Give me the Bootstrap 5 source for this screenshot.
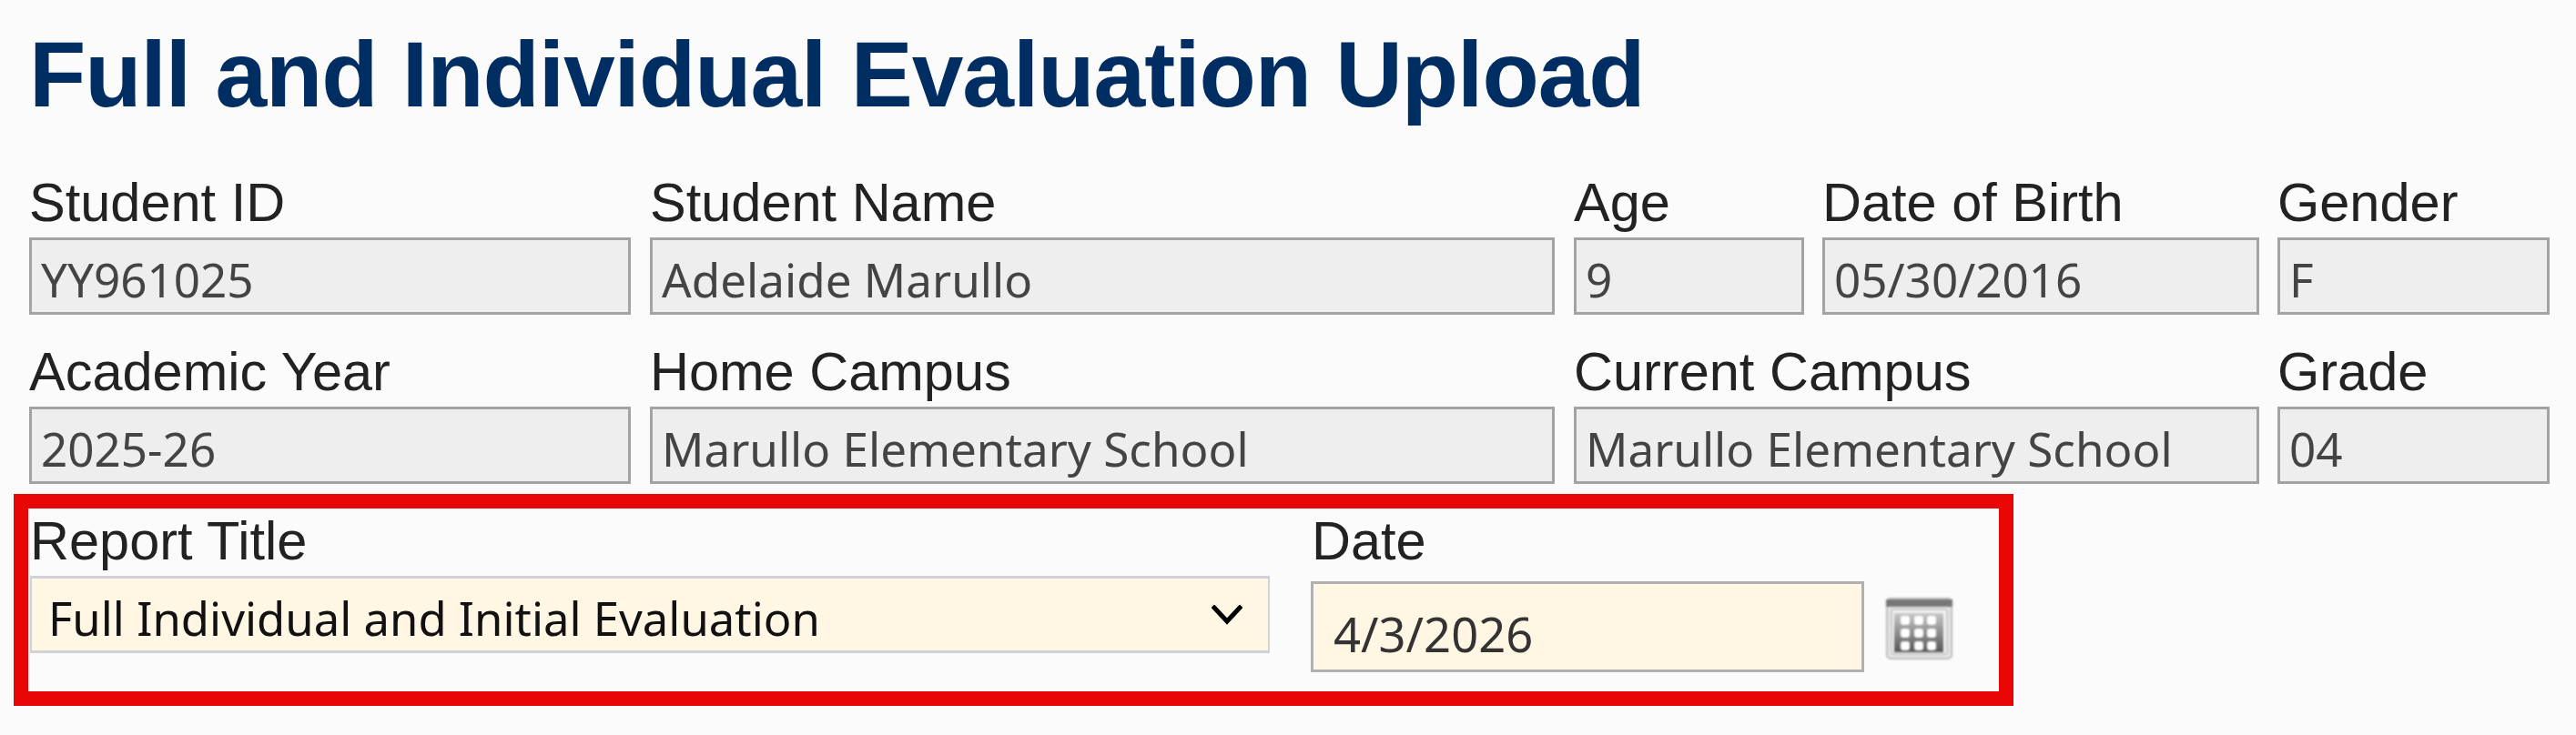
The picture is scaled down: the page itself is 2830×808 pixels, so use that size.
<!DOCTYPE html>
<html lang="en">
<head>
<meta charset="utf-8">
<title>Full and Individual Evaluation Upload</title>
<link href="https://cdn.jsdelivr.net/npm/bootstrap@5.3.0/dist/css/bootstrap.min.css" rel="stylesheet">
<style>
html,body{background:#fbfbfb;}
body{font-family:"Liberation Sans",Arial,sans-serif;overflow:hidden;}
.page-wrap{padding:25px 0 0 32px;width:2830px;}
.page-title{font:700 102px/114px "Liberation Sans",Arial,sans-serif;color:#002d62;margin:0 0 51px;letter-spacing:-1.05px;}
.field-grid{display:grid;grid-template-columns:682px 1015px 273px 500px 299px;row-gap:30px;}
.span-two{grid-column:span 2;}
.gap-wide{padding-right:21px;}
.gap-narrow{padding-right:20px;}
.field-label{display:block;font-size:59.5px;line-height:66px;color:#222;margin:0 0 5px;white-space:nowrap;}
.form-control.ro-field{height:85px;border:3px solid #a3a3a3;border-radius:0;background:#eee;color:#444;font:400 51.2px/1 "Noto Sans",sans-serif;padding:7px 10px 0;box-shadow:none;opacity:1;}
.red-frame{margin:11px 0 0 -17px;width:2197px;height:233px;border:16px solid #e80606;display:flex;padding:3px 0 0 2px;gap:45px;}
.title-col{width:1362px;}
.date-col{width:705px;}
.date-label{margin-bottom:11px;padding-left:1px;}
.form-select.title-select{height:85px;border:3px solid #cfd3d6;border-width:3px 2px;border-radius:0;background-color:#fff6e3;background-image:url("data:image/svg+xml,%3csvg xmlns='http://www.w3.org/2000/svg' viewBox='0 0 34 22'%3e%3cpath fill='none' stroke='%23000' stroke-width='5' stroke-linecap='square' d='M3 3l14 15L31 3'/%3e%3c/svg%3e");background-size:34px 22px;background-position:right 28px center;color:#111;font:400 50.8px/1 "Noto Sans",sans-serif;padding:10px 80px 0 18px;box-shadow:none;}
.form-control.date-field{width:608px;height:100px;border:3px solid #b0b0b0;border-radius:0;background:#fff6e3;color:#333;font:400 52.5px/1 "Noto Sans",sans-serif;padding:15px 22px 0;box-shadow:none;}
.cal-icon{width:73px;height:68px;flex:none;margin-top:18px;filter:blur(.8px);}
</style>
</head>
<body>
<main class="page-wrap">
  <h1 class="page-title">Full and Individual Evaluation Upload</h1>
  <form>
    <div class="field-grid">
      <div class="gap-wide"><label class="field-label">Student ID</label><input class="form-control ro-field" readonly value="YY961025"></div>
      <div class="gap-wide"><label class="field-label">Student Name</label><input class="form-control ro-field" readonly value="Adelaide Marullo"></div>
      <div class="gap-narrow"><label class="field-label">Age</label><input class="form-control ro-field" readonly value="9"></div>
      <div class="gap-narrow"><label class="field-label">Date of Birth</label><input class="form-control ro-field" readonly value="05/30/2016"></div>
      <div><label class="field-label">Gender</label><input class="form-control ro-field" readonly value="F"></div>

      <div class="gap-wide"><label class="field-label">Academic Year</label><input class="form-control ro-field" readonly value="2025-26"></div>
      <div class="gap-wide"><label class="field-label">Home Campus</label><input class="form-control ro-field" readonly value="Marullo Elementary School"></div>
      <div class="span-two gap-narrow"><label class="field-label">Current Campus</label><input class="form-control ro-field" readonly value="Marullo Elementary School"></div>
      <div><label class="field-label">Grade</label><input class="form-control ro-field" readonly value="04"></div>
    </div>
    <div class="red-frame">
      <div class="title-col">
        <label class="field-label">Report Title</label>
        <select class="form-select title-select"><option>Full Individual and Initial Evaluation</option></select>
      </div>
      <div class="date-col">
        <label class="field-label date-label">Date</label>
        <div class="d-flex gap-4">
          <input class="form-control date-field" value="4/3/2026">
          <svg class="cal-icon" viewBox="0 0 73 68" aria-hidden="true">
            <defs><linearGradient id="gridFill" x1="0" y1="0" x2="0" y2="1"><stop offset="0" stop-color="#c8c8c8"/><stop offset="1" stop-color="#555"/></linearGradient></defs>
            <rect x="1" y="1" width="71" height="66" rx="4" fill="#e6e6e6" stroke="#bdbdbd" stroke-width="2"/>
            <rect x="0" y="2" width="73" height="8" fill="#777"/>
            <rect x="6" y="13" width="61" height="49" rx="2" fill="#f4f4f4" stroke="#c8c8c8" stroke-width="2"/>
            <rect x="9" y="17" width="54" height="43" fill="url(#gridFill)"/>
            <g fill="#fff">
              <rect x="16" y="20" width="10" height="10" rx="3"/><rect x="31" y="20" width="10" height="10" rx="3"/><rect x="45" y="20" width="10" height="10" rx="3"/>
              <rect x="16" y="34" width="10" height="10" rx="3"/><rect x="31" y="34" width="10" height="10" rx="3"/><rect x="45" y="34" width="10" height="10" rx="3"/>
              <rect x="16" y="48" width="10" height="10" rx="3"/><rect x="31" y="48" width="10" height="10" rx="3"/><rect x="45" y="48" width="10" height="10" rx="3"/>
            </g>
          </svg>
        </div>
      </div>
    </div>
  </form>
</main>
<script src="https://cdn.jsdelivr.net/npm/bootstrap@5.3.0/dist/js/bootstrap.bundle.min.js"></script>
</body>
</html>
